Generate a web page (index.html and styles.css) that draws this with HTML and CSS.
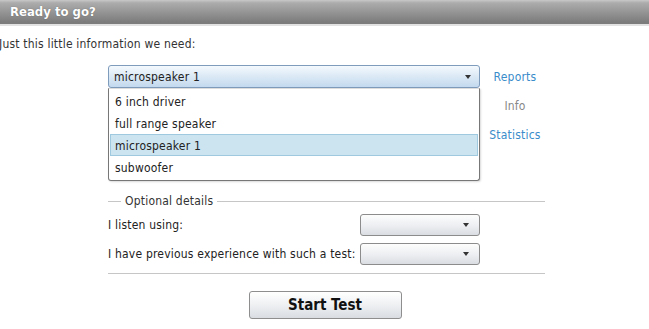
FILE: index.html
```html
<!DOCTYPE html>
<html lang="en">
<head>
  <meta charset="UTF-8" />
  <title>Ready to go?</title>
  <link rel="stylesheet" href="styles.css">
</head>
<body>
  <header>
    <h1>Ready to go?</h1>
  </header>

  <p class="intro">Just this little information we need:</p>

  <main class="form">
    <div class="top">
      <div class="picker">
        <div class="select main-select">
          <span>microspeaker 1</span>
          <span class="arrow"></span>
        </div>
        <ul class="dropdown">
          <li>6 inch driver</li>
          <li>full range speaker</li>
          <li class="selected">microspeaker 1</li>
          <li>subwoofer</li>
        </ul>
      </div>
      <nav class="links">
        <a href="#">Reports</a>
        <span class="current">Info</span>
        <a href="#">Statistics</a>
      </nav>
    </div>

    <div class="legend">
      <span class="line short"></span>
      <span class="legend-text">Optional details</span>
      <span class="line"></span>
    </div>

    <div class="field">
      <label>I listen using:</label>
      <div class="select small"><span></span><span class="arrow"></span></div>
    </div>
    <div class="field">
      <label>I have previous experience with such a test:</label>
      <div class="select small"><span></span><span class="arrow"></span></div>
    </div>

    <hr class="sep">

    <div class="actions">
      <button class="start">Start Test</button>
    </div>
  </main>
</body>
</html>
```

FILE: styles.css
```css
* {
  box-sizing: border-box;
  margin: 0;
  padding: 0;
}

body {
  font-family: 'DejaVu Sans Condensed', 'DejaVu Sans', sans-serif;
  font-size: 12px;
  letter-spacing: 0.2px;
  color: #222;
  background: #fff;
  width: 649px;
}

header {
  height: 26px;
  background: linear-gradient(#c8c8c8, #acacac 12%, #7c7c7c 92%);
  border-bottom: 2px solid #e2e2e2;
  padding: 4px 10px 0;
}

header h1 {
  font-size: 13px;
  font-weight: bold;
  letter-spacing: 0;
  color: #fff;
  text-shadow: 0 0 1px rgba(0, 0, 0, 0.4);
  line-height: 16px;
}

.intro {
  margin: 11px 0 0 -1px;
  line-height: 15px;
  color: #333;
}

.form {
  width: 437px;
  margin: 13px 0 0 108px;
}

.top {
  display: flex;
  height: 129px;
}

.picker {
  position: relative;
  width: 372px;
}

.select {
  display: flex;
  align-items: center;
  justify-content: space-between;
  height: 23px;
  border: 1px solid #8ea7c4;
  border-radius: 3px;
  padding: 0 8px 0 5px;
}

.main-select {
  background: linear-gradient(#f4f9fd, #dbe9f5 50%, #c3d9ee);
  border-color: #7f9cbd;
}

.arrow {
  width: 0;
  height: 0;
  border-left: 3px solid transparent;
  border-right: 3px solid transparent;
  border-top: 4px solid #333;
}

.dropdown {
  position: absolute;
  top: 23px;
  left: 0;
  width: 372px;
  list-style: none;
  background: #fff;
  border: 1px solid #777;
  border-top: 1px solid #ddd;
  border-radius: 0 0 3px 3px;
  box-shadow: 1px 1px 2px rgba(0, 0, 0, 0.15);
  padding: 1px 1px 2px;
}

.dropdown li {
  height: 22px;
  line-height: 22px;
  padding-left: 4px;
  border: 1px solid transparent;
}

.dropdown li.selected {
  background: #cce4f0;
  border-color: #9fc9df;
}

.links {
  flex: 1;
  display: flex;
  flex-direction: column;
  align-items: center;
  padding: 5px 0 0 5px;
  gap: 14px;
  line-height: 15px;
}

.links a {
  color: #3a8cca;
  text-decoration: none;
}

.links .current {
  color: #888;
}

.legend {
  display: flex;
  align-items: center;
  height: 14px;
}

.legend .line {
  flex: 1;
  height: 1px;
  background: #c6c6c6;
}

.legend .line.short {
  flex: none;
  width: 13px;
}

.legend-text {
  padding: 0 4px;
  color: #333;
}

.field {
  display: flex;
  align-items: center;
  justify-content: space-between;
  width: 372px;
  margin-top: 6px;
}

.field + .field {
  margin-top: 7px;
}

.select.small {
  width: 120px;
  height: 22px;
  background: linear-gradient(#fdfdfd, #eceef1 55%, #dadde2);
  border-color: #8c8c8c;
  padding-right: 10px;
}

.sep {
  border: none;
  border-top: 1px solid #c6c6c6;
  margin-top: 8px;
}

.actions {
  display: flex;
  justify-content: center;
  margin-top: 17px;
  padding-right: 3px;
}

.start {
  width: 153px;
  height: 28px;
  font-family: inherit;
  font-size: 15px;
  font-weight: bold;
  color: #111;
  border: 1px solid #8e8e8e;
  border-radius: 3px;
  background: linear-gradient(#ffffff, #eef0f2 50%, #d9dde2);
  cursor: pointer;
}
```
